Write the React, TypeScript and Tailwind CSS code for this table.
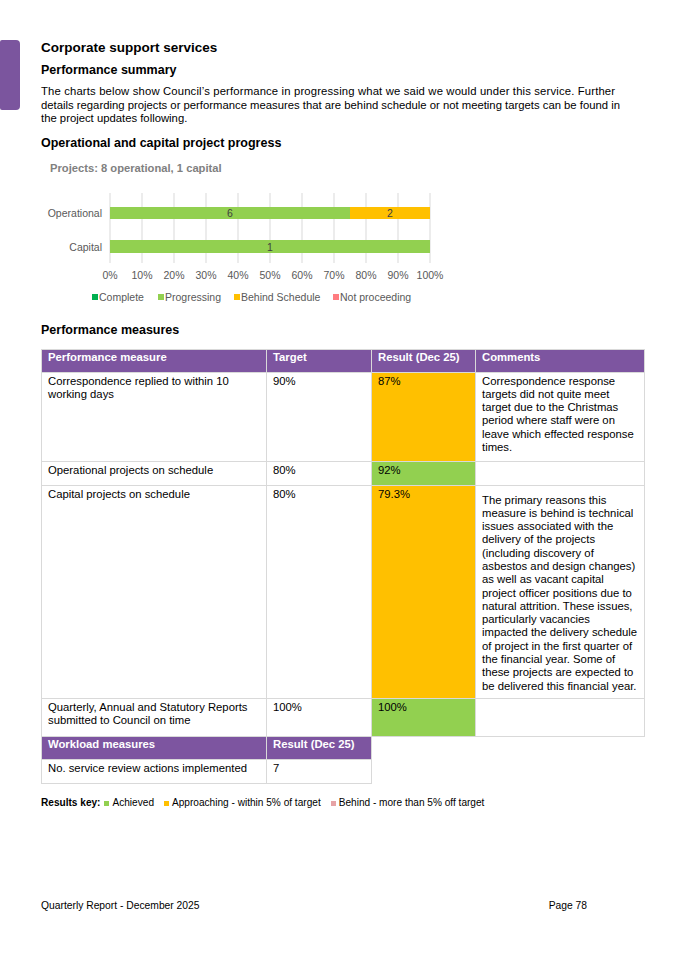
const font = "font-['Liberation_Sans',Arial,sans-serif]"

const gridX = Array.from({ length: 11 }, (_, i) => 69 + i * 32)

const legend = [
  { label: 'Complete', color: '#00b050', sx: 51, tx: 58 },
  { label: 'Progressing', color: '#92d050', sx: 117, tx: 124 },
  { label: 'Behind Schedule', color: '#ffc000', sx: 193, tx: 200 },
  { label: 'Not proceeding', color: '#ff7c80', sx: 292, tx: 299 },
]

function ProgressChart() {
  const ff = 'Liberation Sans, Arial, sans-serif'
  return (
    <svg width={603} height={125} className="block">
      {gridX.map((x) => (
        <line key={x} x1={x} x2={x} y1={8} y2={78} stroke="#d9d9d9" strokeWidth={1} />
      ))}
      <rect x={69} y={22} width={240} height={12} fill="#92d050" />
      <rect x={309} y={22} width={80} height={12} fill="#ffc000" />
      <rect x={69} y={55} width={320} height={13} fill="#92d050" />
      <g fontFamily={ff} fontSize={10.5} fill="#404040" textAnchor="middle" dominantBaseline="central">
        <text x={189} y={28}>6</text>
        <text x={349} y={28}>2</text>
        <text x={229} y={61.5}>1</text>
      </g>
      <g fontFamily={ff} fontSize={10.5} fill="#595959" textAnchor="end" dominantBaseline="central">
        <text x={61} y={28}>Operational</text>
        <text x={61} y={61.5}>Capital</text>
      </g>
      <g fontFamily={ff} fontSize={10.5} fill="#595959" textAnchor="middle" dominantBaseline="central">
        {gridX.map((x, i) => (
          <text key={x} x={x} y={90}>
            {i * 10}%
          </text>
        ))}
      </g>
      {legend.map((l) => (
        <g key={l.label}>
          <rect x={l.sx} y={109} width={6} height={6} fill={l.color} />
          <text x={l.tx} y={112} fontFamily={ff} fontSize={10.5} fill="#595959" dominantBaseline="central">
            {l.label}
          </text>
        </g>
      ))}
    </svg>
  )
}

const th = 'border border-[#d9d9d9] bg-[#7d55a0] px-[6px] pt-[1px] text-left align-top font-bold text-white'
const td = 'border border-[#d9d9d9] px-[6px] pt-[2px] text-left align-top'

export default function App() {
  return (
    <div className={`flex h-[955px] w-[675px] items-start bg-white text-black ${font}`}>
      <div className="mt-[40px] h-[70px] w-[20px] shrink-0 rounded-r-[4px] rounded-l-[2px] bg-[#7b559e]" />
      <div className="ml-[21px] flex w-[603px] flex-col pt-[40px]">
        <h1 className="text-[13.5px] leading-[16px] font-bold">Corporate support services</h1>
        <h2 className="mt-[6px] text-[12.5px] leading-[16px] font-bold">Performance summary</h2>
        <p className="mt-[7px] text-[11.3px] leading-[13.5px] whitespace-nowrap">
          <span className="tracking-[0.15px]">
            The charts below show Council’s performance in progressing what we said we would under this service. Further
          </span>
          <br />
          details regarding projects or performance measures that are behind schedule or not meeting targets can be found in
          <br />
          the project updates following.
        </p>
        <h2 className="mt-[9px] text-[12.5px] leading-[16px] font-bold">Operational and capital project progress</h2>
        <div className="mt-[10px] ml-[9px] text-[11.2px] leading-[14px] font-bold text-[#808080]">
          Projects: 8 operational, 1 capital
        </div>
        <div className="mt-[10px]">
          <ProgressChart />
        </div>
        <h2 className="mt-[12px] text-[12.5px] leading-[16px] font-bold">Performance measures</h2>

        <table className="mt-[11px] w-[603px] table-fixed border-collapse text-[11.3px] leading-[13.3px]">
          <colgroup>
            <col className="w-[225px]" />
            <col className="w-[105px]" />
            <col className="w-[104px]" />
            <col className="w-[169px]" />
          </colgroup>
          <thead>
            <tr className="h-[23px]">
              <th className={th}>Performance measure</th>
              <th className={th}>Target</th>
              <th className={th}>Result (Dec 25)</th>
              <th className={th}>Comments</th>
            </tr>
          </thead>
          <tbody className="whitespace-nowrap">
            <tr className="h-[89px]">
              <td className={td}>
                Correspondence replied to within 10
                <br />
                working days
              </td>
              <td className={td}>90%</td>
              <td className={`${td} bg-[#ffc000]`}>87%</td>
              <td className={td}>
                Correspondence response
                <br />
                targets did not quite meet
                <br />
                target due to the Christmas
                <br />
                period where staff were on
                <br />
                leave which effected response
                <br />
                times.
              </td>
            </tr>
            <tr className="h-[24px]">
              <td className={td}>Operational projects on schedule</td>
              <td className={td}>80%</td>
              <td className={`${td} bg-[#92d050]`}>92%</td>
              <td className={td}></td>
            </tr>
            <tr className="h-[213px]">
              <td className={td}>Capital projects on schedule</td>
              <td className={td}>80%</td>
              <td className={`${td} bg-[#ffc000]`}>79.3%</td>
              <td className={`${td} pt-[8px]`}>
                The primary reasons this
                <br />
                measure is behind is technical
                <br />
                issues associated with the
                <br />
                delivery of the projects
                <br />
                (including discovery of
                <br />
                asbestos and design changes)
                <br />
                as well as vacant capital
                <br />
                project officer positions due to
                <br />
                natural attrition. These issues,
                <br />
                particularly vacancies
                <br />
                impacted the delivery schedule
                <br />
                of project in the first quarter of
                <br />
                the financial year. Some of
                <br />
                these projects are expected to
                <br />
                be delivered this financial year.
              </td>
            </tr>
            <tr className="h-[38px]">
              <td className={td}>
                Quarterly, Annual and Statutory Reports
                <br />
                submitted to Council on time
              </td>
              <td className={td}>100%</td>
              <td className={`${td} bg-[#92d050]`}>100%</td>
              <td className={td}></td>
            </tr>
          </tbody>
        </table>

        <table className="w-[330px] table-fixed border-collapse text-[11.3px] leading-[13.3px]">
          <colgroup>
            <col className="w-[225px]" />
            <col className="w-[105px]" />
          </colgroup>
          <thead>
            <tr className="h-[23px]">
              <th className={`${th} border-t-0`}>Workload measures</th>
              <th className={`${th} border-t-0`}>Result (Dec 25)</th>
            </tr>
          </thead>
          <tbody>
            <tr className="h-[24px]">
              <td className={td}>No. service review actions implemented</td>
              <td className={td}>7</td>
            </tr>
          </tbody>
        </table>

        <div className="mt-[13px] flex items-center text-[10.1px] leading-[12px] whitespace-nowrap">
          <span className="font-bold">Results key:</span>
          <span className="ml-[4px] h-[5px] w-[5px] bg-[#92d050]" />
          <span className="ml-[3px]">Achieved</span>
          <span className="ml-[10px] h-[5px] w-[5px] bg-[#ffc000]" />
          <span className="ml-[3px]">Approaching - within 5% of target</span>
          <span className="ml-[10px] h-[5px] w-[5px] bg-[#e6a3a6]" />
          <span className="ml-[3px]">Behind - more than 5% off target</span>
        </div>

        <div className="mt-[90px] flex justify-between pr-[57px] text-[10.3px] leading-[13px]">
          <span>Quarterly Report - December 2025</span>
          <span>Page 78</span>
        </div>
      </div>
    </div>
  )
}
